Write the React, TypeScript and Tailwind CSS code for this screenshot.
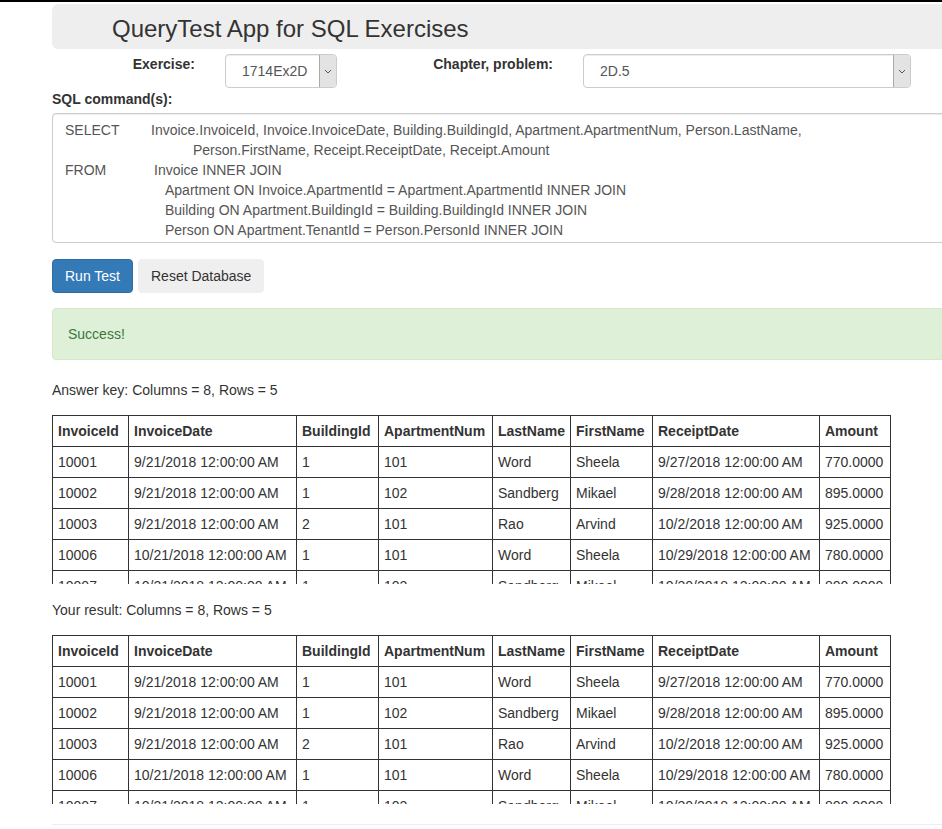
import React from 'react';

interface ResultRow {
  invoiceId: string;
  invoiceDate: string;
  buildingId: string;
  apartmentNum: string;
  lastName: string;
  firstName: string;
  receiptDate: string;
  amount: string;
}

const columns = ['InvoiceId', 'InvoiceDate', 'BuildingId', 'ApartmentNum', 'LastName', 'FirstName', 'ReceiptDate', 'Amount'];

const rows: ResultRow[] = [
  { invoiceId: '10001', invoiceDate: '9/21/2018 12:00:00 AM', buildingId: '1', apartmentNum: '101', lastName: 'Word', firstName: 'Sheela', receiptDate: '9/27/2018 12:00:00 AM', amount: '770.0000' },
  { invoiceId: '10002', invoiceDate: '9/21/2018 12:00:00 AM', buildingId: '1', apartmentNum: '102', lastName: 'Sandberg', firstName: 'Mikael', receiptDate: '9/28/2018 12:00:00 AM', amount: '895.0000' },
  { invoiceId: '10003', invoiceDate: '9/21/2018 12:00:00 AM', buildingId: '2', apartmentNum: '101', lastName: 'Rao', firstName: 'Arvind', receiptDate: '10/2/2018 12:00:00 AM', amount: '925.0000' },
  { invoiceId: '10006', invoiceDate: '10/21/2018 12:00:00 AM', buildingId: '1', apartmentNum: '101', lastName: 'Word', firstName: 'Sheela', receiptDate: '10/29/2018 12:00:00 AM', amount: '780.0000' },
  { invoiceId: '10007', invoiceDate: '10/21/2018 12:00:00 AM', buildingId: '1', apartmentNum: '102', lastName: 'Sandberg', firstName: 'Mikael', receiptDate: '10/30/2018 12:00:00 AM', amount: '800.0000' },
];

const Chevron: React.FC = () => (
  <svg width="8" height="5" viewBox="0 0 8 5" fill="none">
    <path d="M1 1 L4 4 L7 1" stroke="#555" strokeWidth="1" />
  </svg>
);

const SelectBox: React.FC<{ value: string; width: string }> = ({ value, width }) => (
  <div className={`${width} h-[34px] flex border border-[#ccc] rounded-[4px] bg-white shadow-[inset_0_1px_1px_rgba(0,0,0,0.075)]`}>
    <div className="flex-1 flex items-center pl-4 text-[14px] text-[#555]">{value}</div>
    <div className="w-[17px] flex items-center justify-center bg-[#e3e3e3] border-l border-[#aaa] rounded-r-[3px]">
      <Chevron />
    </div>
  </div>
);

const cell = 'border border-[#333] p-[5px] whitespace-nowrap overflow-hidden';

const ResultTable: React.FC = () => (
  <div className="mt-[15px] h-[169px] overflow-hidden">
    <table className="table-fixed w-[838px] border-collapse text-[14px] leading-5 text-[#333]">
      <colgroup>
        <col className="w-[76px]" />
        <col className="w-[168px]" />
        <col className="w-[82px]" />
        <col className="w-[114px]" />
        <col className="w-[78px]" />
        <col className="w-[82px]" />
        <col className="w-[167px]" />
        <col className="w-[71px]" />
      </colgroup>
      <thead>
        <tr>
          {columns.map((c) => (
            <th key={c} className={`${cell} text-left font-bold`}>
              {c}
            </th>
          ))}
        </tr>
      </thead>
      <tbody>
        {rows.map((r) => (
          <tr key={r.invoiceId}>
            <td className={cell}>{r.invoiceId}</td>
            <td className={cell}>{r.invoiceDate}</td>
            <td className={cell}>{r.buildingId}</td>
            <td className={cell}>{r.apartmentNum}</td>
            <td className={cell}>{r.lastName}</td>
            <td className={cell}>{r.firstName}</td>
            <td className={cell}>{r.receiptDate}</td>
            <td className={cell}>{r.amount}</td>
          </tr>
        ))}
      </tbody>
    </table>
  </div>
);

const App: React.FC = () => {
  return (
    <div className="w-full min-h-[829px] overflow-hidden bg-white font-['Liberation_Sans',Arial,sans-serif] text-[14px] leading-5 text-[#333]">
      <div className="h-[2px] bg-black" />
      <div className="ml-[52px] w-[1140px] pt-[2px]">
        {/* header */}
        <div className="h-[45px] bg-[#eee] rounded-[6px] pl-[60px] pt-[12px]">
          <h1 className="text-[24px] leading-[26px] font-normal">QueryTest App for SQL Exercises</h1>
        </div>

        {/* exercise pickers */}
        <div className="mt-[5px] flex items-start">
          <label className="w-[158px] pr-[15px] text-right font-bold">Exercise:</label>
          <div className="ml-[15px]">
            <SelectBox value="1714Ex2D" width="w-[112px]" />
          </div>
          <label className="w-[231px] pr-[15px] text-right font-bold">Chapter, problem:</label>
          <div className="ml-[15px]">
            <SelectBox value="2D.5" width="w-[328px]" />
          </div>
        </div>

        <div className="mt-px mb-[4px] font-bold">SQL command(s):</div>
        <div className="h-[130px] overflow-hidden border border-[#ccc] rounded-[4px] px-3 pt-[6px] text-[#555] whitespace-nowrap shadow-[inset_0_1px_1px_rgba(0,0,0,0.075)]">
          <div className="flex">
            <span className="w-[86px]">SELECT</span>
            <span>Invoice.InvoiceId, Invoice.InvoiceDate, Building.BuildingId, Apartment.ApartmentNum, Person.LastName,</span>
          </div>
          <div className="pl-[128px]">Person.FirstName, Receipt.ReceiptDate, Receipt.Amount</div>
          <div className="flex">
            <span className="w-[89px]">FROM</span>
            <span>Invoice INNER JOIN</span>
          </div>
          <div className="pl-[100px]">Apartment ON Invoice.ApartmentId = Apartment.ApartmentId INNER JOIN</div>
          <div className="pl-[100px]">Building ON Apartment.BuildingId = Building.BuildingId INNER JOIN</div>
          <div className="pl-[100px]">Person ON Apartment.TenantId = Person.PersonId INNER JOIN</div>
        </div>

        {/* actions */}
        <div className="mt-4 flex gap-[5px]">
          <button className="h-[34px] px-3 rounded-[4px] bg-[#337ab7] border border-[#2e6da4] text-white">Run Test</button>
          <button className="h-[34px] px-3 rounded-[4px] bg-[#efefef] border border-[#efefef] text-[#333]">Reset Database</button>
        </div>

        <div className="mt-[15px] border border-[#d6e9c6] bg-[#dff0d8] rounded-[4px] p-[15px] text-[#3c763d]">Success!</div>

        <p className="mt-5">Answer key: Columns = 8, Rows = 5</p>
        <ResultTable />

        <p className="mt-4">Your result: Columns = 8, Rows = 5</p>
        <ResultTable />

        <hr className="mt-5 border-0 border-t border-[#eee]" />
      </div>
    </div>
  );
};

export default App;
